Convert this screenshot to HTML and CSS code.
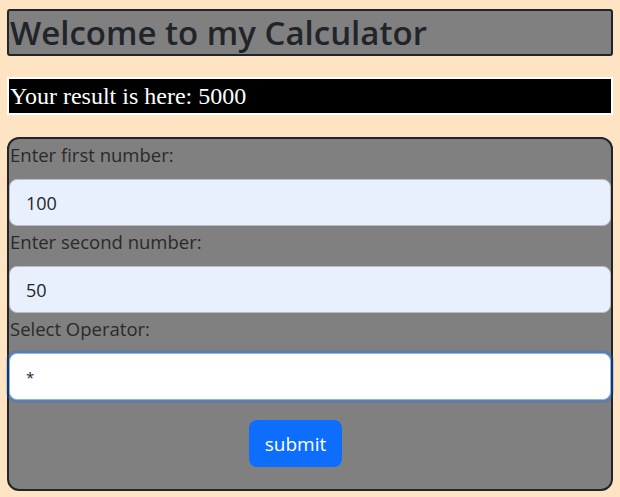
FILE: index.html
```html
<!DOCTYPE html>
<html>
<head>
<meta charset="utf-8">
<link rel="stylesheet" href="styles.css">
</head>
<body>
<div class="page">
  <h1 class="title">Welcome to my Calculator</h1>
  <div class="result">Your result is here: 5000</div>
  <form class="calc">
    <label class="lbl" for="a">Enter first number:</label>
    <input class="field autofill" id="a" type="text" value="100">
    <label class="lbl" for="b">Enter second number:</label>
    <input class="field autofill" id="b" type="text" value="50">
    <label class="lbl" for="op">Select Operator:</label>
    <select class="field focus" id="op">
      <option>*</option>
    </select>
    <div class="actions">
      <button class="btn" type="button">submit</button>
    </div>
  </form>
</div>
</body>
</html>
```

FILE: styles.css
```css
html, body {
  margin: 0;
  padding: 0;
  background: #ffe4c4;
}
.page {
  padding: 9px 7px 0 7px;
  font-family: "Open Sans", "Noto Sans", sans-serif;
  color: #212529;
}
.title {
  margin: 0;
  height: 43px;
  border: 2px solid #212529;
  border-radius: 3px;
  background: #808080;
  font-size: 33px;
  font-weight: 600;
  line-height: 44px;
  padding-left: 1px;
  color: #212529;
  white-space: nowrap;
}
.result {
  margin-top: 21px;
  height: 34px;
  border: 2px solid #ffffff;
  background: #000000;
  color: #ffffff;
  font-family: "Liberation Serif", serif;
  font-size: 24px;
  line-height: 34px;
  padding-left: 1px;
}
.calc {
  margin-top: 22px;
  border: 2px solid #212529;
  border-radius: 12px;
  background: #808080;
  padding: 0 2px 22px 0;
  display: flex;
  flex-direction: column;
}
.lbl {
  display: block;
  font-size: 18.5px;
  line-height: 32px;
  margin-bottom: 8px;
  padding-left: 1px;
  color: #2a2a2a;
}
.field {
  box-sizing: border-box;
  display: block;
  width: 602px;
  height: 47px;
  margin: 0;
  padding: 0 16px;
  font-family: "Open Sans", "Noto Sans", sans-serif;
  font-size: 18px;
  color: #212529;
  border: 1px solid #b9bcc0;
  border-radius: 8px;
  outline: none;
  appearance: none;
  -webkit-appearance: none;
}
.autofill {
  background: #e8f0fe;
}
.focus {
  background: #ffffff;
  border-color: #86b7fe;
  box-shadow: 0 0 0 3px rgba(13, 110, 253, 0.25);
  font-size: 15px;
}
.actions {
  display: flex;
  justify-content: center;
  margin-top: 20px;
  padding-right: 27px;
}
.btn {
  height: 47px;
  width: 93px;
  padding: 0;
  border: none;
  border-radius: 8px;
  background: #0d6efd;
  color: #ffffff;
  font-family: "Open Sans", "Noto Sans", sans-serif;
  font-size: 19px;
}
```
